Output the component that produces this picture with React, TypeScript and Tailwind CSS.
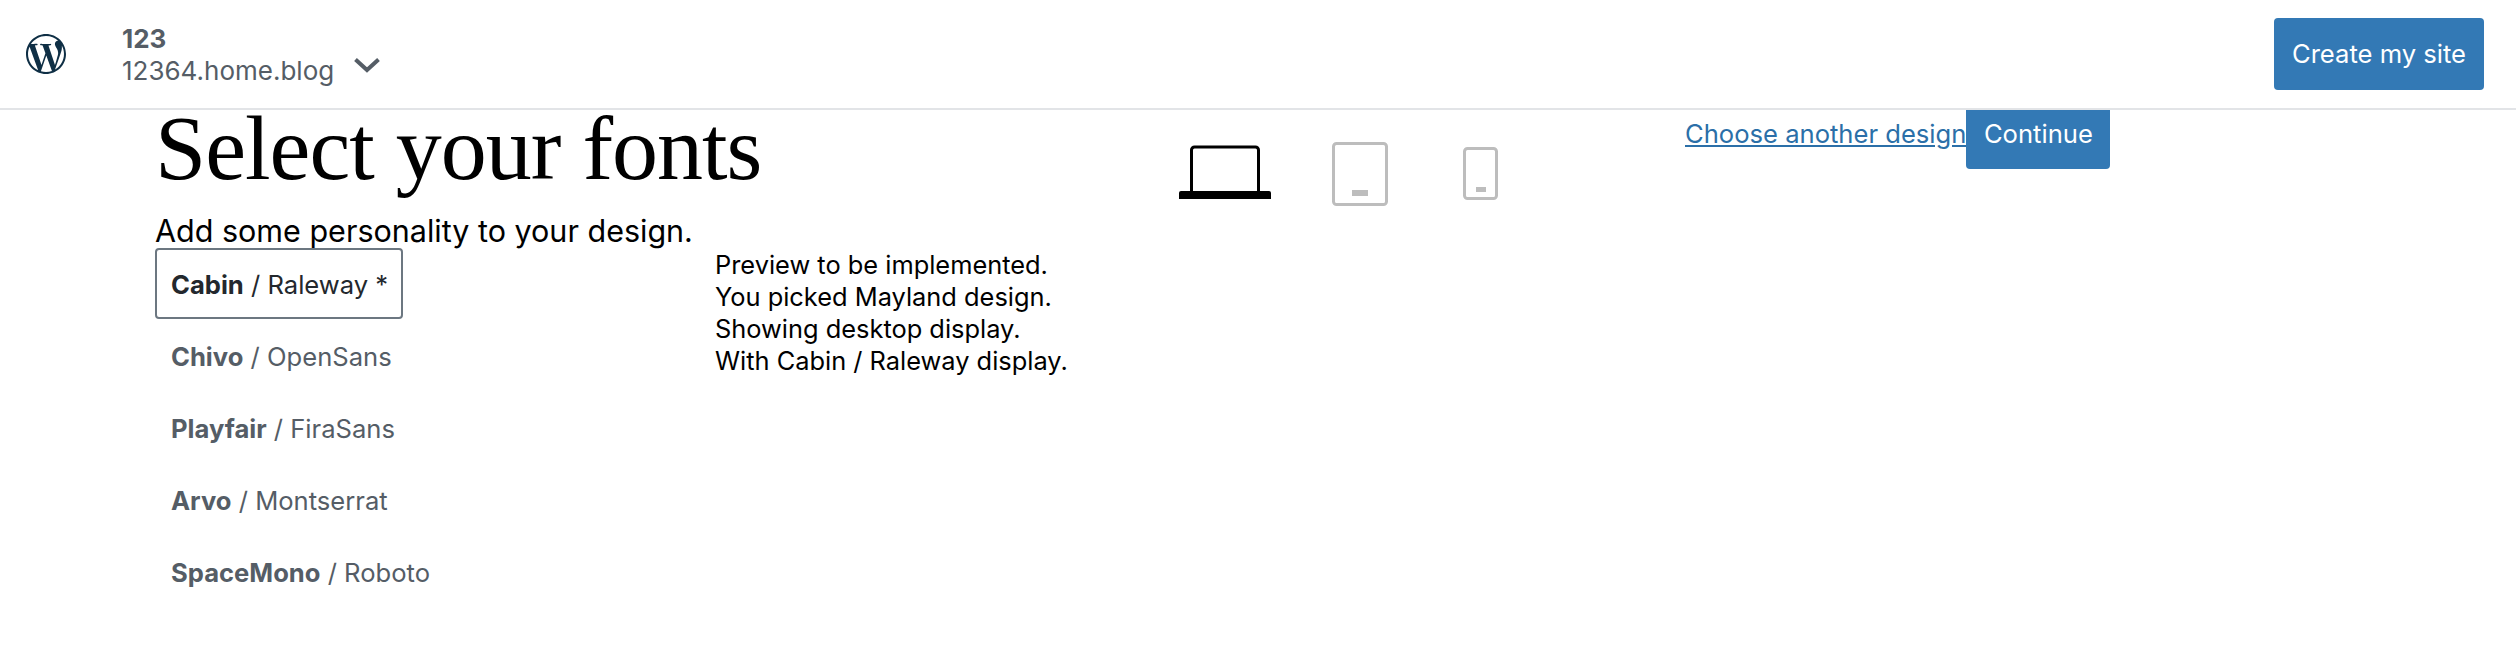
import React from "react";
import { SiWordpress } from "react-icons/si";

const fonts: [string, string][] = [
  ["Cabin", "Raleway *"],
  ["Chivo", "OpenSans"],
  ["Playfair", "FiraSans"],
  ["Arvo", "Montserrat"],
  ["SpaceMono", "Roboto"],
];

function Laptop() {
  return (
    <svg width="92" height="54" viewBox="0 0 92 54" className="block">
      <path d="M12.5 46V5a3 3 0 0 1 3-3h61a3 3 0 0 1 3 3v41" fill="none" stroke="#000" strokeWidth="3" />
      <path d="M2 46h88a2 2 0 0 1 2 2v6H0v-6a2 2 0 0 1 2-2z" fill="#000" />
    </svg>
  );
}

function Tablet() {
  return (
    <svg width="56" height="64" viewBox="0 0 56 64" className="block">
      <rect x="1.5" y="1.5" width="53" height="61" rx="3" fill="none" stroke="#bdbdbd" strokeWidth="3" />
      <rect x="20" y="48" width="16" height="6" fill="#bdbdbd" />
    </svg>
  );
}

function Phone() {
  return (
    <svg width="35" height="53" viewBox="0 0 35 53" className="block">
      <rect x="1.5" y="1.5" width="32" height="50" rx="3" fill="none" stroke="#bdbdbd" strokeWidth="3" />
      <rect x="13" y="40" width="10" height="5" fill="#bdbdbd" />
    </svg>
  );
}

export default function App() {
  return (
    <div className="min-h-[648px] bg-white text-black font-['Inter',sans-serif]">
      <header className="relative z-10 bg-white h-[110px] border-b-2 border-[#e2e4e7] flex items-center justify-between pl-[26px] pr-[32px]">
        <div className="flex items-center">
          <SiWordpress className="w-[40px] h-[40px] text-[#0f2f45]" />
          <div className="ml-[56px] pt-[2px] text-[#555d66] text-[26px] leading-[32px]">
            <div className="font-bold">123</div>
            <div>12364.home.blog</div>
          </div>
          <svg width="26" height="16" viewBox="0 0 26 16" className="ml-[20px] mt-[22px]">
            <path d="M1.5 2.5L13 13L24.5 2.5" fill="none" stroke="#555d66" strokeWidth="4" />
          </svg>
        </div>
        <button className="w-[210px] h-[72px] rounded-[4px] bg-[#3379b5] text-white text-[25.6px]">Create my site</button>
      </header>
      <main className="flex items-start pl-[155px]">
        <div className="w-[1020px] shrink-0">
          <h1 className="font-['Liberation_Serif',serif] text-[92px] leading-[70px] tracking-[-1px] pt-[3px] h-[103px]">Select your fonts</h1>
          <p className="text-[30.5px] leading-[36px] h-[35px]">Add some personality to your design.</p>
          <div className="flex items-start">
            <ul className="w-[560px] shrink-0 text-[25.6px]">
              {fonts.map(([a, b], i) => (
                <li key={a} className="h-[72px]">
                  <div className={i === 0 ? "inline-flex items-center h-[71px] pt-[3px] pl-[14px] pr-[13px] border-2 border-[#6c7781] rounded-[4px] text-[#23282d]" : "flex items-center h-[71px] pt-[3px] px-[16px] text-[#555d66]"}>
                    <span className="font-bold">{a}</span>
                    <span className="whitespace-pre"> / {b}</span>
                  </div>
                </li>
              ))}
            </ul>
            <div className="text-[25.4px] leading-[32px] pt-[1px]">
              <div>Preview to be implemented.</div>
              <div>You picked Mayland design.</div>
              <div>Showing desktop display.</div>
              <div>With Cabin / Raleway display.</div>
            </div>
          </div>
        </div>
        <div className="w-[510px] shrink-0 flex items-start pt-[32px] pl-[4px]">
          <div className="mt-[3px]"><Laptop /></div>
          <div className="ml-[61px]"><Tablet /></div>
          <div className="ml-[75px] mt-[5px]"><Phone /></div>
        </div>
        <div className="flex items-center -mt-[11px]">
          <a href="#" className="text-[25.6px] text-[#2b6fa8] underline">Choose another design</a>
          <button className="w-[144px] h-[70px] rounded-[4px] bg-[#3379b5] text-white text-[25.6px]">Continue</button>
        </div>
      </main>
    </div>
  );
}
